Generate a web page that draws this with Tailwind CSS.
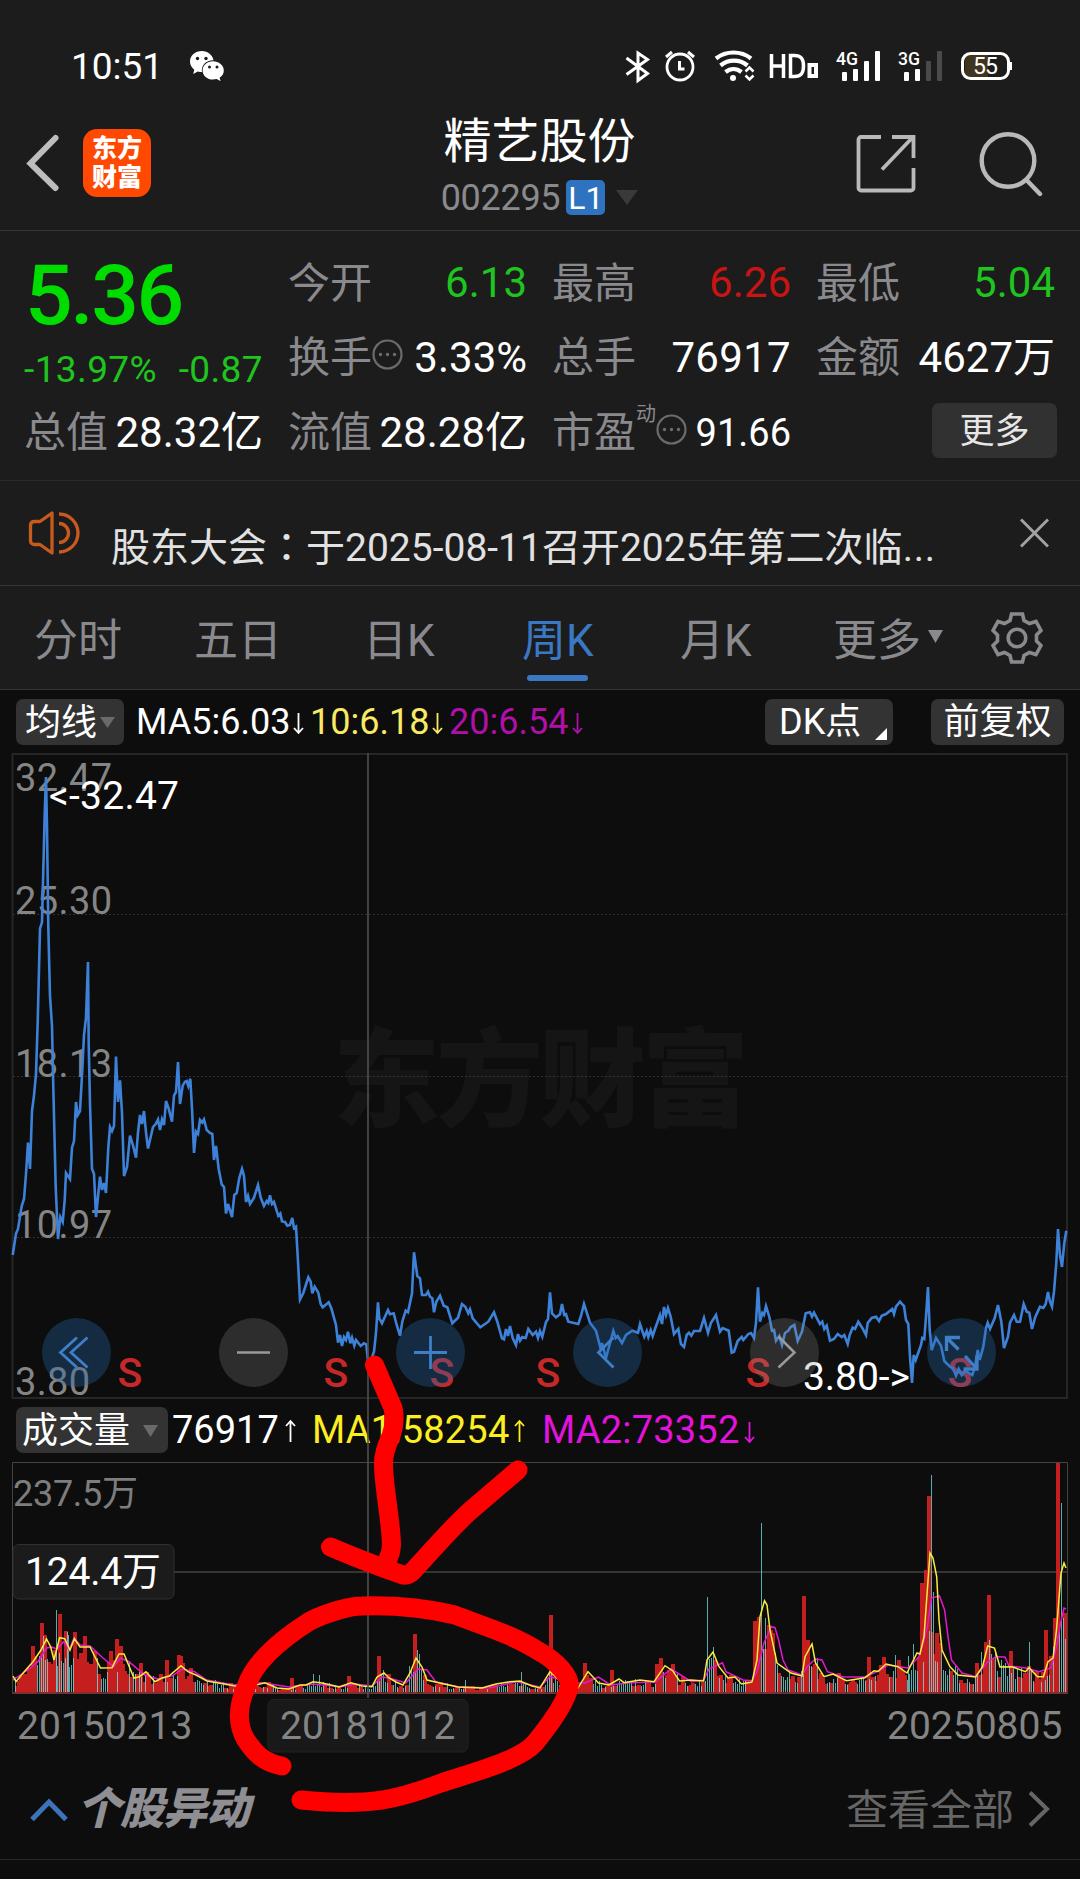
<!DOCTYPE html>
<html lang="zh-CN">

<head>
    <meta charset="UTF-8">
    <title>精艺股份 002295</title>
    <script src="https://cdn.jsdelivr.net/npm/@tailwindcss/browser@4"></script>
</head>

<body class="bg-[#0d0d0d]">
    <div class="relative w-[1080px] h-[1879px] overflow-hidden flex flex-col bg-[#0d0d0d] text-white font-['Roboto','Noto_Sans_CJK_SC',sans-serif] leading-none whitespace-nowrap">

        <!-- STATUS BAR -->
        <div class="h-[106px] pt-[26px] pl-[71px] pr-[68px] bg-[#1c1c1c] flex items-center justify-between">
            <div class="flex items-center">
                <span class="text-[37px] w-[119px]">10:51</span>
                <svg class="w-[34px] h-[30px]" viewBox="0 0 34 30">
                    <path fill="#fff" d="M12 0C5.200 0 0 4.600 0 10.500c0 3.400 1.700 6.200 4.300 8.200L3.200 23l4.600-2.500c1.400.4 2.800.6 4.200.6C10.800 14.500 16 9 23.500 9.200 22.500 4 17.800 0 12 0z" />
                    <path fill="#fff" d="M23 10.300c-5.800 0-10.400 4-10.400 9.200S17.200 28.600 23 28.600c1.300 0 2.500-.2 3.600-.5l4 2-1-3.300c2.600-1.700 4.200-4.300 4.200-7.300 0-5.200-5-9.200-10.800-9.200z" />
                    <g fill="#1c1c1c">
                        <circle cx="7.500" cy="7.500" r="1.700" /><circle cx="16" cy="7.500" r="1.700" />
                        <circle cx="19.500" cy="16" r="1.500" /><circle cx="27" cy="16" r="1.500" />
                    </g>
                </svg>
            </div>
            <svg class="w-[388px] h-[36px]" viewBox="624 48 388 36" fill="none" stroke="#fff">
                <!-- bluetooth -->
                <path stroke-width="3" d="M626.500 58l21 15.500-9.500 7V53l9.500 6.500-21 15" />
                <!-- alarm -->
                <circle cx="680" cy="67" r="13" stroke-width="2.800" />
                <path stroke-width="3" d="M679.500 61v8h5M666 57l6-5M694 57l-6-5" />
                <!-- wifi -->
                <g stroke-width="4.200">
                    <path d="M716 58.500c10-8 25-8 35 0M720.500 65.500c8-6.500 19-6.500 27 0M725.500 72c5-4 11-4 16 0" />
                    <circle cx="733" cy="78" r="3" fill="#fff" stroke="none" />
                    <path stroke-width="2.500" d="M745.500 71.500l4-4 4 4M745.500 75.500l4 4 4-4" />
                </g>
                <!-- HD -->
                <path stroke-width="3.500" d="M771.500 54v24M783.500 54v24M771.500 66h12M790.500 55.500v21h4c7 0 9-4 9-10.500s-2-10.500-9-10.500z" />
                <path stroke-width="4" d="M809.500 65h6.500v11h-6.500z" />
                <!-- signals -->
                <g fill="#fff" stroke="none">
                    <rect x="842" y="72" width="5" height="9" rx="1" /><rect x="853" y="69" width="5" height="12" rx="1" />
                    <rect x="864" y="61" width="5" height="20" rx="1" /><rect x="875" y="51" width="5" height="30" rx="1" />
                    <rect x="904" y="72" width="5" height="9" rx="1" /><rect x="915" y="69" width="5" height="12" rx="1" />
                    <rect x="926" y="61" width="5" height="20" rx="1" fill="#4a4a4a" /><rect x="937" y="51" width="5" height="30" rx="1" fill="#4a4a4a" />
                    <text x="836" y="65" font-size="19" font-weight="500" textLength="22" lengthAdjust="spacingAndGlyphs">4G</text>
                    <text x="898" y="65" font-size="19" font-weight="500" textLength="22" lengthAdjust="spacingAndGlyphs">3G</text>
                </g>
                <!-- battery -->
                <path fill="#40351c" stroke="none" d="M965 54h23v24h-23z" />
                <rect x="962.500" y="53.500" width="46" height="25" rx="8" stroke-width="3" />
                <path stroke-width="3" d="M1010.500 62v8" />
                <text x="973" y="74" font-size="23" fill="#fff" stroke="none" textLength="25">55</text>
            </svg>
        </div>

        <!-- HEADER -->
        <div class="h-[125px] bg-[#1c1c1c] border-b border-[#333] flex items-start justify-between pl-[26px] pr-[37px]">
            <div class="flex items-center pt-[23px] w-[310px]">
                <svg class="w-[34px] h-[58px]" viewBox="0 0 34 58" fill="none" stroke="#bdbdbd" stroke-width="6" stroke-linecap="round">
                    <path d="M29.500 4L4.500 29.500 29.500 54" />
                </svg>
                <div class="ml-[23px] w-[68px] h-[68px] rounded-[14px] bg-[#ff4800] flex flex-col items-center justify-center gap-[4px] text-[25px] font-black">
                    <span>东方</span>
                    <span>财富</span>
                </div>
            </div>
            <div class="flex flex-col items-center pt-[12px]">
                <div class="text-[48px]">精艺股份</div>
                <div class="mt-[14px] h-[35px] flex items-center">
                    <span class="text-[36px] text-[#8a8a8e] tracking-[-0.3px]">002295</span>
                    <span class="ml-[6px] w-[39px] h-[35px] rounded-[5px] bg-[#2f72c0] text-[32px] flex items-center justify-center">L1</span>
                    <svg class="ml-[11px] w-[22px] h-[15px]" viewBox="0 0 22 15"><path fill="#3a3a3a" d="M0 0h22L11 15z" /></svg>
                </div>
            </div>
            <div class="flex items-start justify-end pt-[26px] w-[300px]">
                <svg class="mt-[2px] w-[60px] h-[60px]" viewBox="0 0 60 60" fill="none" stroke="#b9b9b9" stroke-width="3.800">
                    <path d="M25 3H5a2.500 2.500 0 0 0-2.500 2.500V54A2.500 2.500 0 0 0 5 56.500h50a2.500 2.500 0 0 0 2.500-2.500V34M36 3h21.500v21M56 4L26 35.500" />
                </svg>
                <svg class="ml-[63px] w-[64px] h-[66px]" viewBox="0 0 64 66" fill="none" stroke="#b9b9b9" stroke-width="4.400" stroke-linecap="round">
                    <circle cx="29" cy="28.500" r="26.300" />
                    <path d="M48 48.500L61 62" />
                </svg>
            </div>
        </div>

        <!-- QUOTE -->
        <div class="h-[250px] bg-[#1c1c1c] border-b border-[#2a2a2a] pt-[14px] px-[25px] grid grid-cols-4 grid-rows-[75px_75px_75px] gap-x-[26px] text-[42px]">
            <div class="row-span-2 text-[#00dc00] flex flex-col">
                <span class="text-[84px] font-medium mt-[9px] tracking-[-2.400px]">5.36</span>
                <div class="mt-[13px] -ml-[1px] text-[37px] text-[#1fc41f] flex justify-between">
                    <span class="tracking-[0.4px]">-13.97%</span><span class="tracking-[0.4px]">-0.87</span>
                </div>
            </div>
            <div class="flex items-center justify-between"><span class="-ml-[1px] mt-[2px] text-[#8a8a8e]">今开</span><span class="text-[#1fc41f]">6.13</span></div>
            <div class="flex items-center justify-between"><span class="-ml-[1px] mt-[2px] text-[#8a8a8e]">最高</span><span class="text-[#c91414]">6.26</span></div>
            <div class="flex items-center justify-between"><span class="-ml-[1px] mt-[2px] text-[#8a8a8e]">最低</span><span class="text-[#1fc41f]">5.04</span></div>

            <div class="flex items-center justify-between">
                <span class="-ml-[1px] mt-[1px] text-[#8a8a8e] flex items-center">换手
                    <svg class="-mt-[8px] w-[31px] h-[31px]" viewBox="0 0 31 31" fill="none" stroke="#6c6c6c" stroke-width="2.200">
                        <circle cx="15.500" cy="15.500" r="14" />
                        <path stroke-width="3.400" stroke-linecap="round" d="M8.500 15.500h.01M15.500 15.500h.01M22.500 15.500h.01" />
                    </svg>
                </span>
                <span>3.33%</span>
            </div>
            <div class="flex items-center justify-between"><span class="-ml-[1px] mt-[1px] text-[#8a8a8e]">总手</span><span class="tracking-[0.3px]">76917</span></div>
            <div class="flex items-center justify-between"><span class="-ml-[1px] mt-[1px] text-[#8a8a8e]">金额</span><span>4627万</span></div>

            <div class="flex items-center justify-between"><span class="-ml-[1px] mt-[1px] text-[#8a8a8e]">总值</span><span class="mt-[1px]">28.32亿</span></div>
            <div class="flex items-center justify-between"><span class="-ml-[1px] mt-[1px] text-[#8a8a8e]">流值</span><span class="mt-[1px]">28.28亿</span></div>
            <div class="flex items-center justify-between">
                <span class="-ml-[1px] mt-[1px] text-[#8a8a8e] flex items-center">市盈
                    <span class="text-[20px] -mt-[38px]">动</span>
                    <svg class="-mt-[8px] w-[31px] h-[31px]" viewBox="0 0 31 31" fill="none" stroke="#6c6c6c" stroke-width="2.200">
                        <circle cx="15.500" cy="15.500" r="14" />
                        <path stroke-width="3.400" stroke-linecap="round" d="M8.500 15.500h.01M15.500 15.500h.01M22.500 15.500h.01" />
                    </svg>
                </span>
                <span class="text-[38px]">91.66</span>
            </div>
            <div class="flex items-center justify-end">
                <span class="-mt-[4px] -mr-[2px] w-[125px] h-[55px] pt-[1px] rounded-[7px] bg-[#313131] text-[#e6e6e6] text-[35px] flex items-center justify-center">更多</span>
            </div>
        </div>

        <!-- NOTICE -->
        <div class="h-[105px] bg-[#1c1c1c] border-b border-[#333] flex items-center pl-[28px] pr-[31px]">
            <svg class="w-[52px] h-[46px]" viewBox="0 0 52 46" fill="none" stroke="#c85a1e" stroke-width="3.300">
                <path d="M24 3v40L12 34.500H6.500C4 34.500 2.500 33 2.500 30.500v-15c0-2.500 1.500-4 4-4H12z" stroke-linejoin="round" />
                <path d="M31 13.500a9.500 9.500 0 0 1 0 19M31 4a19 19 0 0 1 0 38" />
            </svg>
            <span class="ml-[31px] mt-[27px] text-[39px] text-[#e2e2e2]">股东大会<span class="font-['Noto_Sans_CJK_TC',sans-serif]" lang="zh-TW">：</span>于2025-08-11召开2025年第二次临<span class="tracking-[0.8px]">...</span></span>
            <svg class="ml-auto w-[29px] h-[30px]" viewBox="0 0 29 30" stroke="#a2a2a2" stroke-width="3">
                <path d="M1 1.500l27 27M28 1.500l-27 27" />
            </svg>
        </div>

        <!-- TABS -->
        <div class="h-[104px] bg-[#1c1c1c] border-b border-[#333] flex items-center pl-[34px] text-[44px] text-[#8a8a8e]">
            <span class="w-[160px] mt-[6px]">分时</span>
            <span class="w-[169px] mt-[6px]">五日</span>
            <span class="w-[159px] mt-[6px]">日K</span>
            <div class="relative w-[158px] mt-[6px] text-[#3b78c4]">周K
                <span class="absolute left-[5px] top-[56px] w-[61px] h-[6px] rounded-full bg-[#3b78c4]"></span>
            </div>
            <span class="w-[153px] mt-[6px]">月K</span>
            <span class="mt-[6px]">更多</span>
            <svg class="ml-[7px] -mt-[2px] w-[15px] h-[13px]" viewBox="0 0 15 13"><path fill="#8a8a8e" d="M0 0h15L7.500 13z" /></svg>
            <svg class="ml-[48px] w-[52px] h-[54px]" viewBox="-26 -27 52 54" fill="none" stroke="#8a8a8e" stroke-width="3.600">
                <circle r="8.800" />
                <path d="M-5.500 -24H5.500L7 -17.500L12.500 -14.500L19 -16.500L24 -7.500L19.500 -3V3L24 7.500L19 16.500L12.500 14.500L7 17.500L5.500 24H-5.500L-7 17.500L-12.500 14.500L-19 16.500L-24 7.500L-19.500 3V-3L-24 -7.500L-19 -16.500L-12.500 -14.500L-7 -17.500Z" />
            </svg>
        </div>

        <!-- MA ROW -->
        <div class="h-[63px] flex items-center pl-[16px] pr-[16px] text-[36px]">
            <span class="w-[108px] h-[46px] pt-[2px] rounded-[7px] bg-[#333] flex items-center pl-[9px]">均线
                <svg class="ml-[3px] w-[15px] h-[11px]" viewBox="0 0 15 11"><path fill="#6a6a6a" d="M0 0h15L7.500 11z" /></svg>
            </span>
            <span class="ml-[12px] w-[174px] pt-[1px] flex items-center">MA5:6.03<svg class="ml-[3px] w-[11px] h-[26px]" viewBox="0 0 11 26" fill="none" stroke="currentColor" stroke-width="1.800"><path d="M5.500 4v19M1 19l4.500 5 4.500-5" /></svg></span>
            <span class="w-[139px] pt-[1px] flex items-center text-[#f8ea64]">10:6.18<svg class="ml-[3px] w-[11px] h-[26px]" viewBox="0 0 11 26" fill="none" stroke="currentColor" stroke-width="1.800"><path d="M5.500 4v19M1 19l4.500 5 4.500-5" /></svg></span>
            <span class="flex items-center pt-[1px] text-[#b010a8]">20:6.54<svg class="ml-[4px] w-[11px] h-[26px]" viewBox="0 0 11 26" fill="none" stroke="currentColor" stroke-width="1.800"><path d="M5.500 4v19M1 19l4.500 5 4.500-5" /></svg></span>
            <span class="ml-auto w-[128px] h-[46px] pt-[1px] rounded-[7px] bg-[#333] flex items-center pl-[14px]">DK点
                <svg class="ml-[14px] mt-[24px] w-[12px] h-[12px]" viewBox="0 0 12 12"><path fill="#fff" d="M12 0v12H0z" /></svg>
            </span>
            <span class="ml-[38px] w-[133px] h-[46px] pt-[1px] rounded-[7px] bg-[#333] flex items-center justify-center">前复权</span>
        </div>

        <!-- PRICE CHART -->
        <svg class="w-[1080px] h-[650px] shrink-0" viewBox="0 753 1080 650" fill="none">
            <text x="333" y="1118" font-size="107" font-weight="900" fill="#151515" textLength="416">东方财富</text>
            <path stroke="#262626" stroke-width="2" d="M12.500 754H1067V1398H12.500z" />
            <path stroke="#303030" stroke-dasharray="2 2" d="M13 914.500H1067M13 1076.500H1067M13 1237.500H1067" />
            <g font-size="38" fill="#858585">
                <text x="15" y="791" textLength="97">32.47</text>
                <text x="15" y="914" textLength="97">25.30</text>
                <text x="15" y="1077" textLength="97">18.13</text>
                <text x="15" y="1238" textLength="97">10.97</text>
                <text x="15" y="1395" textLength="75">3.80</text>
            </g>
            <g font-size="41" font-weight="500" fill="#c42828" text-anchor="middle">
                <text x="130" y="1387">S</text>
                <text x="336" y="1387">S</text>
                <text x="442" y="1387">S</text>
                <text x="548" y="1387">S</text>
                <text x="758" y="1387">S</text>
                <text x="960" y="1387">S</text>
            </g>
            <polyline stroke="#3d82d8" stroke-width="2.600" points="12.7,1255 16,1233.5 18,1229 21.7,1206 24,1199 26,1174 28,1142.5 30,1169 32,1111 34,1095.6 36,1074 37.7,1022 40,928.7 42,922 43.3,870 44.7,814 46,777 47,827 48.3,926.5 50,996 52,1026 53.3,1087 55.7,1187 58,1239 60.3,1217 62.7,1222 64.7,1200 66,1173 70,1179 72,1147.7 74,1141 76,1102 77.7,1115 80,1111 82.3,1069.6 84,1035 86,1017.6 88,962 88.7,1043.6 90,1104 92,1169 94,1173.7 96,1217 100,1176.7 102,1190 104,1183 106,1193 108.3,1147.7 110,1127 112,1131 114,1126 116,1056.6 118,1102 120,1080.4 122,1113 124,1176 127,1167 130,1135.5 133,1145.5 136,1157.6 138,1132.5 140,1115 142,1124 144,1111 146,1132.5 148,1148.5 153,1127 155.7,1124 158,1119.5 160,1130 162,1119.5 164,1125 166,1101 168.7,1108.6 172,1121.6 174,1095.6 176,1092 178,1062 180,1104 182.7,1085.6 185,1081.7 186.7,1081 188.3,1086 190.3,1078.7 192,1108.6 194,1153 196,1131.6 198,1134 200,1120 202.3,1122.5 204,1119.5 206.7,1130 210,1133 212.3,1134 214,1160 216,1146 218.7,1169 221.7,1184.5 224,1187 226,1213.6 228,1204 232,1217 234.3,1195 236.7,1193 239.3,1178 242,1169 244,1176 246,1202 248,1196 250,1204 254,1197.6 258,1185 260.7,1197.6 264,1206 266.7,1201 268.3,1203 270,1195.4 272,1204 274,1202 278.3,1215.8 280.3,1213.6 282,1221.4 285,1222 287.3,1225.7 290,1225 292.3,1218 294,1228 296,1226.6 297.7,1256 300,1299.5 303.3,1293 308.3,1277.3 310.7,1281.7 312.3,1293.3 314.7,1286.7 318.3,1292.7 320.7,1304 322.7,1307.3 328.7,1302.3 331.3,1308.3 336,1325 338,1342.7 340,1335 342,1346 344,1337 346,1340 348,1331.7 350.3,1343.3 352,1337.7 354.3,1345.7 356,1340 360.7,1346 364,1343.3 366.3,1344.3 368,1361.7 371.7,1358 374,1351.7 376,1333 378,1302.3 379.3,1318.3 382,1323.3 388,1310 390,1314.3 393.7,1313.3 396.7,1325 400,1335.7 402.3,1321.7 405.7,1310.7 408,1312.3 412,1293.3 414,1252.3 417.3,1276 420,1278.3 422,1295 426,1295 428,1291.7 430,1296.7 432.3,1298.3 434,1312.3 436.3,1301.7 440,1295.7 443.7,1305.7 447.3,1307.3 452.3,1323.3 458,1317.7 462,1304 465.3,1306.7 468.3,1313.3 470,1309.3 472.7,1318.3 480.3,1327.3 488.3,1321.7 494,1312.3 497.3,1321.7 502,1338.3 504,1339.3 506,1329 508,1336 510,1326 512.7,1338 516,1345 518,1334 520,1340.7 522.3,1337 525.7,1338 528.3,1329 532.7,1335 536,1331.7 538,1338 540,1331 542.3,1336.7 546,1322 548,1319 550,1292.3 552,1313.3 556,1317.3 560,1314.3 562,1304 564.3,1315 566,1314.3 568.3,1321.7 578.3,1324 581,1316 584,1304 590,1322.7 596,1330.7 601,1350 602,1343 606,1358 613.3,1331 615.7,1338 617.7,1336 622,1343 626,1335 632.3,1330.7 638,1332.7 640,1324 642.3,1331 644.3,1336.7 646.7,1331 648.3,1337 650.7,1330 652.7,1336 655,1329 660,1315 662,1324 664,1307 666,1315 668,1308 670.7,1316.7 674,1334 678.3,1329 681,1344 684,1347 686.7,1335 689,1332.7 691.3,1335.7 694,1331 700,1331 704,1318 708,1333 711,1322.7 716,1315 720,1331.7 722.7,1328 728.7,1330.7 731.7,1352.7 734,1351.7 737.7,1341 741.7,1337 743.3,1340 748.3,1334 751,1333 754,1338 756,1323 758,1287.3 760,1321.7 762.3,1313 764,1315 766,1306 769.3,1316.7 772,1330.7 774,1330 776,1340.7 779.3,1336 782,1345 785,1333 788.3,1330.7 790.7,1327 794.3,1325 797.7,1341 802,1331.7 805.7,1313.3 810,1312.3 812,1316.7 814,1312.7 820,1324 822.3,1321.7 824.3,1329 826.7,1325.7 830,1340.7 834,1339 837.7,1334 841.7,1337 844.3,1335 847.7,1344 849.7,1335 852.7,1327.7 855,1329 858.3,1321.7 862.3,1328 866,1335 867.7,1323 871.7,1318 876,1316.7 879,1321 881.7,1315.7 886,1314 892.3,1309 894,1314 896,1306.7 900,1301.7 904,1306 906,1320 908.3,1324 910,1356.7 912,1383 913.7,1355 915.7,1360 921,1345 922.3,1338 924.3,1339 926,1316.7 928,1287 929.7,1330 931.7,1350 936,1338 941,1345.7 944.3,1361 950,1366.7 953,1368 956,1375.7 958.7,1369 961.7,1375 965,1370.7 972.3,1375 975,1366.7 977.7,1350 979.7,1360 983.3,1346.7 986,1328 987.7,1322.7 990,1329 994.7,1318 998,1305 1001.3,1321.7 1004,1348 1008,1336.7 1010,1322.7 1014,1315 1016.7,1321.7 1020,1321.7 1023.7,1304 1026.7,1311.7 1029.3,1312.7 1032,1329 1035.3,1317 1040,1306.7 1043.3,1308 1045.7,1304 1048,1292 1050,1301.7 1052,1306.7 1054,1291.7 1056.3,1263 1058,1229 1060,1255 1062,1267 1064.3,1243 1066.3,1230.7" />
            <g font-size="39" fill="#fff">
                <text x="49" y="809" textLength="130">&lt;-32.47</text>
                <text x="803" y="1390" textLength="107">3.80-&gt;</text>
            </g>
            <!-- round tool buttons -->
            <g fill="#2666ab" fill-opacity=".34">
                <circle cx="76.500" cy="1352.500" r="34.500" />
                <circle cx="430.500" cy="1352.500" r="34.500" />
                <circle cx="607.500" cy="1352.500" r="34.500" />
                <circle cx="961.500" cy="1352.500" r="34.500" />
            </g>
            <g fill="#8a8a8a" fill-opacity=".26">
                <circle cx="253.500" cy="1352.500" r="34.500" />
                <circle cx="784.500" cy="1352.500" r="34.500" />
            </g>
            <g stroke="#3f7fc8" stroke-width="2.800">
                <path d="M77 1337.500L60.500 1352.500 77 1367.500M87.500 1337.500L71 1352.500 87.500 1367.500" />
                <path d="M414 1352.500h33M430.500 1336v33" />
                <path d="M613.500 1337.500L598.500 1352.500 613.500 1367.500" />
                <path stroke-width="3.300" d="M946.500 1351v-13.500H960M947 1338l11.500 11.500M977 1355.500V1369h-13.500M976.500 1368.500L965 1356" />
            </g>
            <path stroke="#9a9a9a" stroke-width="2.500" d="M237 1352.500h33M778.500 1336.500l16 16-16 15" />
        </svg>

        <!-- VOLUME ROW -->
        <div class="h-[58px] shrink-0 -mt-[1px] flex items-center pl-[16px] text-[38px] pb-[2px]">
            <span class="w-[152px] h-[46px] pt-[1px] rounded-[7px] bg-[#333] flex items-center pl-[6px] text-[36px]">成交量
                <svg class="ml-[13px] w-[15px] h-[12px]" viewBox="0 0 15 12"><path fill="#6a6a6a" d="M0 0h15L7.500 12z" /></svg>
            </span>
            <span class="ml-[4px] w-[140px] flex items-center">76917<svg class="ml-[6px] w-[11px] h-[26px]" viewBox="0 0 11 26" fill="none" stroke="currentColor" stroke-width="1.800"><path d="M5.500 25V5M1 9l4.500-5 4.500 5" /></svg></span>
            <span class="w-[230px] flex items-center tracking-[0.2px] text-[#fcee21]">MA1:58254<svg class="ml-[5px] w-[11px] h-[26px]" viewBox="0 0 11 26" fill="none" stroke="currentColor" stroke-width="1.800"><path d="M5.500 25V5M1 9l4.500-5 4.500 5" /></svg></span>
            <span class="flex items-center tracking-[0.2px] text-[#e312dd]">MA2:73352<svg class="ml-[5px] w-[11px] h-[26px]" viewBox="0 0 11 26" fill="none" stroke="currentColor" stroke-width="1.800"><path d="M5.500 5v20M1 20l4.500 5 4.500-5" /></svg></span>
        </div>

        <!-- VOLUME CHART -->
        <svg class="w-[1080px] h-[300px] shrink-0" viewBox="0 1460 1080 300" fill="none">
            <path stroke="#444" d="M12.500 1462.500H1067.500V1693.500H12.500z" />
            <path stroke="#424242" stroke-width="1.600" d="M13 1572H1067" />
            <path id="volUp" fill="#d41f1f" fill-opacity=".92" />
            <path id="volDown" fill="#78ecea" fill-opacity=".72" />
            <path stroke="#7a3030" stroke-width="1.500" d="M13 1693H1067" />
            <polyline stroke="#e418d0" stroke-width="1.500" points="13,1680 27.5,1670 38,1661.7 46.5,1648 51.6,1647 57,1649 63.7,1641.7 69,1650 74,1638 80,1645 90,1646 103,1658 113.6,1666.7 120.5,1658 129,1661.7 144.6,1675 158,1679 172,1676 182.5,1669 194.5,1671.7 206.6,1680 234,1685 262,1682.7 289,1687 313,1684 341,1686.7 355,1684 372,1686 382,1676.7 392.6,1679 406,1683 418,1669 427,1670 435.6,1681.7 458,1686.7 489,1688 516.5,1681.7 540,1687 550,1676.7 574,1683 585,1683 598.5,1677 610.6,1685 629.5,1682.7 655,1682 671,1669 691.5,1681.7 703.6,1680 709,1669 722.5,1662.7 726,1671.7 743,1680 752,1680.7 757,1671.7 764,1643 771.4,1626.7 775,1627.7 778.6,1640 783,1660 788,1670 802,1675 807,1666.7 815.5,1659 822,1660 827.5,1671.7 843,1677 865,1677 879,1670.7 888,1665 908,1668 919,1656.7 924,1640 927.4,1626.7 931.5,1598 939.5,1596 944.6,1610 948,1636.7 951.5,1660 962,1673 975.6,1676.7 987.7,1661.7 996,1656.7 1005,1657 1009,1666 1025.5,1668 1039,1671.7 1051,1668 1056.5,1646.7 1060.6,1623 1064,1608 1066,1609" />
            <polyline id="volMa" stroke="#f8ec3c" stroke-width="1.500" points="13,1676 16,1681.7 24,1672 33,1661.7 41,1650 46.5,1639 50.6,1646.7 54,1660 59.6,1637.7 64.7,1638.7 70,1650 74.4,1638.7 80,1647 90,1647 100.5,1668 112,1667.7 119,1654 124,1654 134,1678 139.5,1676.7 146,1671.7 155,1681.7 162,1678 169,1676 181,1665.7 188,1671.7 196,1675 207,1681 234,1685.7 248,1687 265,1682.7 277,1688 289,1689 300,1685 306,1685 313,1681.7 322,1683 331,1685 339,1687 351,1682.7 362,1686 372,1686.7 377,1677 384,1673 389,1678 396,1682 403,1685 410,1673 416,1658 422,1667 427,1680 444,1684 458,1687 482,1688 496,1684 510,1681.7 520,1681 532,1686 540,1688 550,1671.7 566,1686 578,1688 588,1671.7 593,1677 598.5,1683 609,1685 619,1679 624,1682.7 640,1680 654,1681.7 665,1665.7 672.6,1670.7 679.5,1681 691,1680 703.6,1681 707,1660 713,1652 719,1666.7 728,1678 735,1677 741.5,1684 752,1682 757,1660 760,1616.7 764.5,1600.7 767,1605 770,1630 777,1663 791,1673 802,1676 805,1656.7 812,1644 815.5,1663 824,1676.7 833,1674 846.5,1680.7 865,1677.7 874,1670.7 878,1671.5 886,1664 898,1666.7 907,1673 917,1653 920,1654 924,1636.7 930,1553 933,1558 936.7,1576.7 939,1620 942,1650 950,1666.7 958,1675 975.6,1677 982.5,1666.7 987.7,1646 994.5,1648 1000,1667 1012,1666.7 1025.5,1671.7 1029,1667.7 1037.6,1676.7 1043.4,1676.7 1048,1661.7 1053,1658 1056.5,1630 1061,1573 1064,1563 1066,1568" />
            <rect x="13" y="1544.500" width="161" height="54.500" rx="6" fill="#1b1b1b" stroke="#303030" />
            <rect x="268" y="1699.500" width="200" height="52.500" rx="6" fill="#191919" stroke="#222" />
            <text x="13" y="1506" font-size="36" fill="#7d7d7d" textLength="125">237.5万</text>
            <text x="25" y="1585" font-size="39" fill="#fff" textLength="136">124.4万</text>
            <g font-size="39" fill="#858585">
                <text x="17" y="1739">20150213</text>
                <text x="280" y="1739">20181012</text>
                <text x="887" y="1739">20250805</text>
            </g>
        </svg>

        <!-- FOOTER -->
        <div class="h-[100px] shrink-0 border-b border-[#2a2a2a] flex items-center pl-[30px] pr-[30px]">
            <svg class="w-[38px] h-[24px]" viewBox="0 0 38 24" fill="none" stroke="#3b74ba" stroke-width="5"><path d="M2 21.500L19 4l17 17.500" /></svg>
            <span class="ml-[9px] -mt-[2px] text-[44px] font-black italic tracking-[-1px] text-[#8e8e93]">个股异动</span>
            <span class="ml-auto mt-[2px] text-[42px] text-[#666]">查看全部</span>
            <svg class="ml-[14px] -mt-[2px] w-[22px] h-[36px]" viewBox="0 0 22 36" fill="none" stroke="#666" stroke-width="4"><path d="M2 1.500l17 16.500L2 34.500" /></svg>
        </div>

        <!-- CROSSHAIR + HAND DRAWN MARKS -->
        <svg class="absolute left-0 top-0 w-[1080px] h-[1879px]" viewBox="0 0 1080 1879" fill="none">
            <path stroke="#505050" stroke-width="1.600" d="M368 753V1698" />
            <g stroke="#f00" stroke-width="19" stroke-linecap="round" stroke-linejoin="round">
                <path d="M374.500 1365L393 1408Q396 1422 391 1436Q383 1453 383.500 1465C384 1490 391 1520 391.500 1545Q391 1553 388 1559" />
                <path d="M330.500 1547Q368 1563 403 1575Q408 1576 413 1571C430 1553 450 1529 470 1511L518 1470" />
                <path d="M282 1766C262 1762 254 1752 246 1740C237 1725 237 1708 246 1687C254 1662 280 1640 310 1621C330 1611 352 1606 362 1606C395 1605 425 1608 455 1615C480 1625 512 1634 540 1652C556 1661 571 1676 569 1687C566 1703 548 1727 535 1743C520 1760 475 1772 441 1783C400 1799 370 1807 301 1800" />
            </g>
        </svg>
    </div>

    <script>
        // [x, top, 1 = up / 0 = down]
        const spikes = [
            [33, 1646, 1], [42, 1623, 1], [45, 1635, 1], [56, 1610, 0], [60, 1614, 1], [68, 1635, 0], [66, 1631, 1], [75, 1632, 1], [85, 1636, 1],
            [111, 1651, 1], [117, 1639, 1], [121, 1646, 1], [141, 1663, 1], [167, 1660, 1], [179, 1655, 1], [292, 1678, 1],
            [313, 1674, 0], [319, 1675, 0], [349, 1676, 1], [379, 1656, 1], [409, 1666, 0], [415, 1634, 1], [465, 1680, 0], [521, 1672, 0],
            [551, 1615, 1], [585, 1663, 1], [612, 1670, 1], [657, 1664, 1], [661, 1658, 1], [707, 1597, 0], [755, 1621, 1],
            [759, 1617, 1], [761, 1523, 0], [765, 1618, 0], [769, 1625, 1], [804, 1596, 1], [808, 1640, 1], [869, 1657, 1],
            [884, 1657, 1], [895, 1655, 0], [908, 1656, 0], [913, 1644, 0], [922, 1583, 1], [926, 1570, 1], [929, 1496, 1],
            [931, 1475, 0], [933, 1592, 0], [937, 1633, 1], [977, 1663, 1], [981, 1652, 0], [986, 1642, 1], [989, 1595, 1],
            [1011, 1651, 1], [1029, 1642, 0], [1046, 1630, 1], [1055, 1618, 1], [1058, 1463, 1], [1061, 1503, 0],
            [1063, 1618, 0], [1065, 1613, 1]
        ];
        const ma = document.getElementById('volMa').getAttribute('points').split(' ').map(p => p.split(',').map(Number));

        function maAt(x) {
            let i = 1;
            while (i < ma.length - 1 && ma[i][0] < x) i++;
            const [x0, y0] = ma[i - 1], [x1, y1] = ma[i];
            return y0 + (y1 - y0) * (x - x0) / (x1 - x0);
        }

        let seed = 7;
        function rnd() {
            seed = (seed * 16807) % 2147483647;
            return seed / 2147483647;
        }

        let up = '', down = '';
        function bar(x, y, isUp) {
            if (isUp) up += `M${x - 2} ${y}h4V1693h-4z`;
            else down += `M${x} ${y}h1V1692h-1z`;
        }
        // one bar every 2px, colours come in runs
        let red = true;
        for (let x = 15; x < 1066; x += 2) {
            const level = Math.min(1693 - maAt(x), 55);
            if (rnd() < (red ? (x < 120 ? 0.2 : 0.45) : 0.35)) red = !red;
            const r = rnd();
            bar(x, Math.round(1693 - Math.max(3, level * (0.55 + r * r * 0.8))), red);
        }
        spikes.forEach(s => bar(s[0], s[1], s[2]));
        document.getElementById('volUp').setAttribute('d', up);
        document.getElementById('volDown').setAttribute('d', down);
    </script>
</body>

</html>
